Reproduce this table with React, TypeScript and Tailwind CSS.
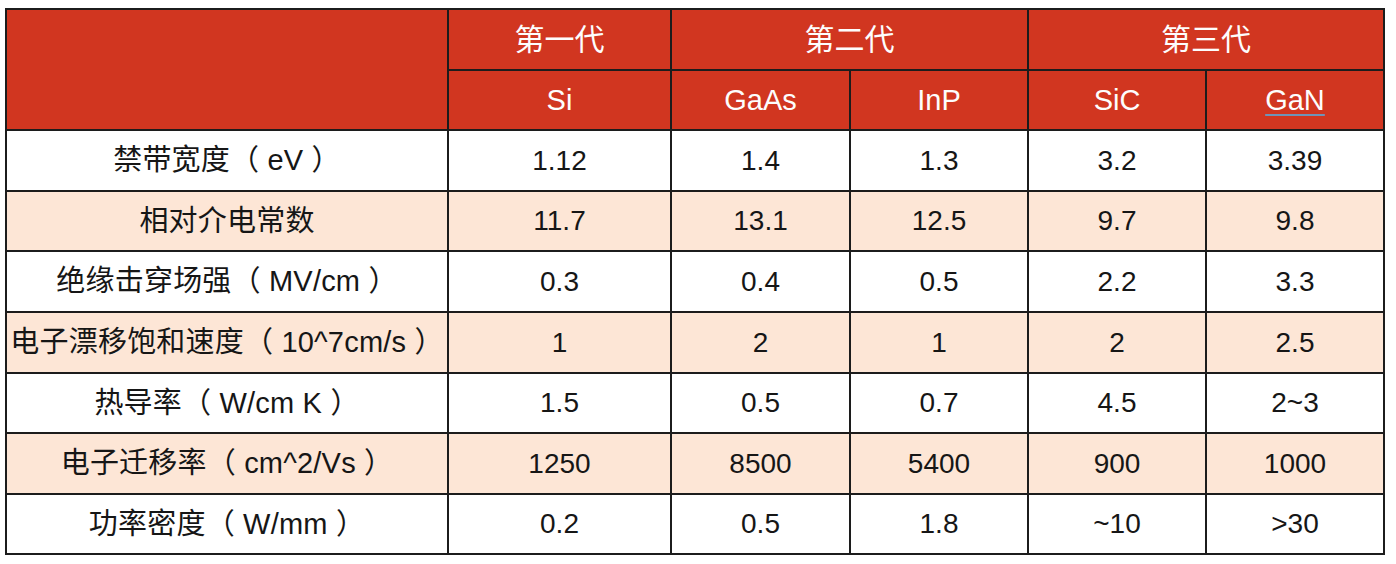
import React from 'react';

const rows: { label: string; values: string[] }[] = [
  { label: '禁带宽度（ eV ）', values: ['1.12', '1.4', '1.3', '3.2', '3.39'] },
  { label: '相对介电常数', values: ['11.7', '13.1', '12.5', '9.7', '9.8'] },
  { label: '绝缘击穿场强（ MV/cm ）', values: ['0.3', '0.4', '0.5', '2.2', '3.3'] },
  { label: '电子漂移饱和速度（ 10^7cm/s ）', values: ['1', '2', '1', '2', '2.5'] },
  { label: '热导率（ W/cm K ）', values: ['1.5', '0.5', '0.7', '4.5', '2~3'] },
  { label: '电子迁移率（ cm^2/Vs ）', values: ['1250', '8500', '5400', '900', '1000'] },
  { label: '功率密度（ W/mm ）', values: ['0.2', '0.5', '1.8', '~10', '>30'] },
];

const rowHeights = ['h-[61px]', 'h-[60px]', 'h-[61px]', 'h-[61px]', 'h-[60px]', 'h-[61px]', 'h-[60px]'];

const cell = 'border-2 border-[#1c1c1c] text-center align-middle p-0';

const App: React.FC = () => {
  return (
    <div className="w-[1396px] h-[564px] bg-white pl-[5px] pt-[8px] font-['Liberation_Sans','Noto_Sans_CJK_SC',sans-serif] text-[28px] leading-none text-[#161616]">
      <table className="table-fixed border-collapse w-[1378px]">
        <colgroup>
          <col className="w-[442px]" />
          <col className="w-[223px]" />
          <col className="w-[179px]" />
          <col className="w-[178px]" />
          <col className="w-[178px]" />
          <col className="w-[178px]" />
        </colgroup>
        <thead className="bg-[#d13620] text-[#fdfdfd]">
          <tr className="h-[61px] text-[30px]">
            <th rowSpan={2} className={cell}></th>
            <th className={`${cell} font-normal`}>第一代</th>
            <th colSpan={2} className={`${cell} font-normal`}>第二代</th>
            <th colSpan={2} className={`${cell} font-normal`}>第三代</th>
          </tr>
          <tr className="h-[60px] text-[29px]">
            <th className={`${cell} font-normal`}>Si</th>
            <th className={`${cell} font-normal`}>GaAs</th>
            <th className={`${cell} font-normal`}>InP</th>
            <th className={`${cell} font-normal`}>SiC</th>
            <th className={`${cell} font-normal`}>
              <span className="underline decoration-[#6f93b8] decoration-2 underline-offset-[4px]">GaN</span>
            </th>
          </tr>
        </thead>
        <tbody>
          {rows.map((r, i) => (
            <tr key={r.label} className={`${rowHeights[i]} ${i % 2 === 1 ? 'bg-[#fde6d6]' : 'bg-white'}`}>
              <td className={`${cell} whitespace-nowrap text-[29px] tracking-[0.2px]`}>{r.label}</td>
              {r.values.map((v, j) => (
                <td key={j} className={cell}>
                  {v}
                </td>
              ))}
            </tr>
          ))}
        </tbody>
      </table>
    </div>
  );
};

export default App;
